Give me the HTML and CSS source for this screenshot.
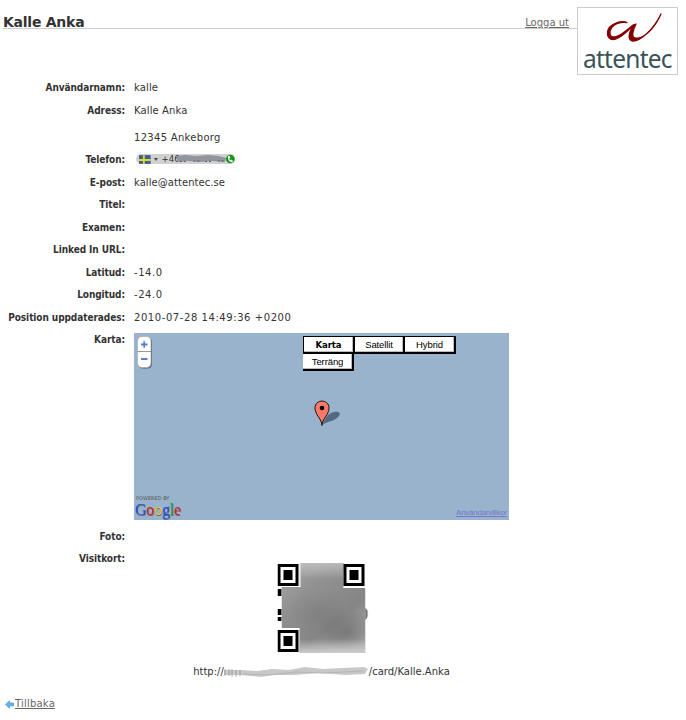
FILE: index.html
```html
<!DOCTYPE html>
<html lang="sv">
<head>
<meta charset="utf-8">
<title>Kalle Anka</title>
<link rel="stylesheet" href="styles.css">
</head>
<body>
<header class="header">
  <div class="bar"><h1>Kalle Anka</h1><a class="logout" href="#">Logga ut</a></div>
  <div class="logo">
    <svg width="99" height="36" viewBox="0 0 99 36"><path d="M49 14.5C43 12 32 16 30 22C28 29 32 33 38 31C46 28 52 20 56 17C51 24 49 31 54 33C62 34 76 21 83 6C77 20 65 32 57 30C53 29 55 22 58 16L55 17C47 24 41 29 36 29C31 29 31 23 34 19C38 15 44 14 49 14.5Z" fill="#820000" stroke="#820000" stroke-width="1.3" stroke-linejoin="round"/></svg>
    <span>attentec</span>
  </div>
</header>
<dl class="details">
  <dt>Användarnamn:</dt><dd>kalle</dd>
  <dt>Adress:</dt><dd class="address"><div>Kalle Anka</div><div class="mixed">12345 Ankeborg</div></dd>
  <dt>Telefon:</dt>
  <dd><div class="phone">
    <svg class="flag" width="12" height="9" viewBox="0 0 12 9"><path fill="#31649c" d="M0 0h12v9H0z"/><path fill="#f5cf27" d="M4 0h2v9H4zM0 4h12v2H0z"/></svg>
    <svg class="caret" width="4" height="3" viewBox="0 0 4 3"><path fill="#444" d="M0 0h4L2 3z"/></svg>
    <span>+46</span>
    <svg class="smudge" width="51" height="8" viewBox="0 0 51 8"><defs><filter id="soft"><feGaussianBlur stdDeviation=".6"/></filter></defs><g filter="url(#soft)"><path d="M0 1L8 0 20 1 32 0 43 1 51 3 49 7 36 6 23 7 10 6 0 7Z" fill="#90969b"/><path d="M3 6.5h8M17 6h6M29 6.5h7M42 6h6" stroke="#4c555c" stroke-dasharray="2 2"/></g></svg>
    <svg class="call" width="9" height="10" viewBox="0 0 9 10"><circle cx="4.5" cy="5" r="4.5" fill="#17941b"/><path d="M3 2C1.7 5 4 8 6.7 7.6M3 2l1 2M5 6l2 1.5" stroke="#fff" stroke-width="1.3" fill="none"/></svg>
  </div></dd>
  <dt>E-post:</dt><dd class="mail">kalle@attentec.se</dd>
  <dt>Titel:</dt><dd></dd>
  <dt>Examen:</dt><dd></dd>
  <dt>Linked In URL:</dt><dd></dd>
  <dt>Latitud:</dt><dd class="number">-14.0</dd>
  <dt>Longitud:</dt><dd class="number">-24.0</dd>
  <dt>Position uppdaterades:</dt><dd class="number">2010-07-28 14:49:36 +0200</dd>
  <dt>Karta:</dt>
  <dd class="mapcell"><div class="map">
    <div class="zoomctl">
      <svg width="16" height="33" viewBox="0 0 16 33"><rect x="1.5" y="1.5" width="13.5" height="31" rx="4.5" fill="#59646f"/><rect x=".5" y=".5" width="13.5" height="31" rx="4.5" fill="#fff" stroke="#aaa" stroke-width=".7"/><path d="M0 15.5h14" stroke="#999"/><path d="M4 8.5h6.5M7.2 5.2v6.5M4 23h6.5" stroke="#5b80cf" stroke-width="1.8"/></svg>
    </div>
    <div class="types"><button class="on">Karta</button><button>Satellit</button><button>Hybrid</button><button class="last">Terräng</button></div>
    <svg class="pin" width="30" height="27" viewBox="0 0 30 27"><defs><filter id="b"><feGaussianBlur stdDeviation=".7"/></filter></defs><path d="M8 25C11 20 13 13 20 12C26 11 28 14 23 18C18 22 14 21 8 25Z" fill="#526b80" filter="url(#b)"/><path d="M8 25.5C8 19 1 15 1 8C1-1.2 15-1.2 15 8C15 15 8 19 8 25.5Z" fill="#fe776b" stroke="#181312"/><circle cx="8" cy="8" r="2.3"/></svg>
    <div class="brand"><small>POWERED BY</small><b><i class="blue">G</i><i class="red">o</i><i class="yellow">o</i><i class="blue">g</i><i class="green">l</i><i class="red">e</i></b></div>
    <a class="terms" href="#">Användarvillkor</a>
  </div></dd>
  <dt>Foto:</dt><dd></dd>
  <dt>Visitkort:</dt>
  <dd class="card">
    <svg class="qr" width="94" height="92" viewBox="0 0 94 92">
      <defs>
        <linearGradient id="g" x2=".8" y2="1"><stop stop-color="#aaa"/><stop offset=".35" stop-color="#919191"/><stop offset=".7" stop-color="#858585"/><stop offset="1" stop-color="#aaa"/></linearGradient>
        <radialGradient id="d"><stop stop-color="#666" stop-opacity=".8"/><stop offset="1" stop-color="#666" stop-opacity="0"/></radialGradient>
        <linearGradient id="t" x2="0" y2="1"><stop stop-color="#c4c4c4" stop-opacity=".8"/><stop offset="1" stop-color="#c4c4c4" stop-opacity="0"/></linearGradient>
        <linearGradient id="e" x2="0" y2="1"><stop stop-color="#ccc" stop-opacity="0"/><stop offset="1" stop-color="#ccc"/></linearGradient>
        <linearGradient id="s"><stop stop-color="#333"/><stop offset="1" stop-color="#eee"/></linearGradient>
        <clipPath id="area"><path d="M22 0h44v25h22v65H22V65H4V24h18z"/></clipPath>
        <g id="finder"><path d="M0 0h21v22H0z"/><path d="M3 3h15v16H3z" fill="#fff"/><path d="M6 6h9v10h-9z"/></g>
      </defs>
      <path d="M0 26h4v7H0zM0 46h4v6H0zM0 54h4v4H0z"/>
      <path d="M88 45Q94 50 88 57z" fill="url(#s)"/>
      <g clip-path="url(#area)"><path d="M0 0h90v92H0z" fill="url(#g)"/>
      <ellipse cx="69" cy="69" rx="30" ry="22" fill="url(#d)" opacity=".75"/><ellipse cx="40" cy="50" rx="30" ry="24" fill="url(#d)" opacity=".3"/>
      <path d="M22 0h44v16H22z" fill="url(#t)"/><path d="M22 76h66v14H22z" fill="url(#e)"/></g>
      <path d="M22 0h1v24H4v-1h18z" fill="#fff"/><path d="M66 24.5h21" stroke="#fff" stroke-width="1" stroke-dasharray="6 2"/>
      <use href="#finder" x="0" y="1"/><use href="#finder" x="66" y="1"/><use href="#finder" x="0" y="67"/>
    </svg>
    <div class="url"><span>http://</span><svg width="145" height="12" viewBox="0 0 145 12"><g filter="url(#soft)"><path d="M0 4H18V9H0z" fill="#ccc"/><path d="M17 4L33 5 48 3 65 4 81 1 99 3 119 2 140 1 144 3 141 8 121 9 95 7 71 9 49 9 37 11 17 9Z" fill="#c8c8c8"/><path d="M19 8L45 9 72 6 100 7 139 5" stroke="#b5b5b5" fill="none"/></g><path d="M1 3v7M5 3v7M8 3v8M12 4v7M16 4v6" stroke="#777" stroke-width=".6"/></svg><span>/card/Kalle.Anka</span></div>
  </dd>
</dl>
<footer><svg width="9" height="9" viewBox="0 0 9 9"><path d="M.5 4.5L4.5 .8V3H8.5V6H4.5V8.2Z" fill="#65b5eb" stroke="#4b99d4" stroke-width=".7"/></svg><a href="#">Tillbaka</a></footer>
</body>
</html>
```
FILE: styles.css
```css
* { box-sizing: border-box; }
body { margin: 0; background: #fff; color: #333; font: 10px/14px "DejaVu Sans", Verdana, sans-serif; height: 720px; }
a { color: #666; }
.header { display: flex; height: 77px; padding: 7px 8px 0 3px; }
.bar { flex: 1; height: 22px; border-bottom: 1px solid #ccc; display: flex; justify-content: space-between; }
h1 { margin: 6px 0 0; font: bold 14px/19px "DejaVu Sans", Verdana, sans-serif; letter-spacing: -.25px; }
.logout { margin: 9px 8px 0 0; }
.logo { width: 101px; height: 68px; border: 1px solid #ccc; display: flex; flex-direction: column; }
.logo span { font: 24.5px/30px "Noto Sans", sans-serif; letter-spacing: -.75px; color: #385458; padding-left: 5px; }
.details { margin: 0; display: grid; grid-template-columns: 125px 375px; column-gap: 9px; grid-template-rows: 23px 49px repeat(8, 22.5px) 196.5px 22.5px 134px; }
dt { font: bold 10px/14px "DejaVu Sans Condensed", "DejaVu Sans", sans-serif; letter-spacing: -.08px; text-align: right; padding-top: 4px; white-space: nowrap; }
dd { margin: 0; padding-top: 4px; letter-spacing: .12px; }
.mail { letter-spacing: .06px; }
.mixed { letter-spacing: .3px; }
.number { letter-spacing: .57px; }
.address { display: flex; flex-direction: column; gap: 13px; }
.phone { display: flex; align-items: center; width: 99px; height: 10px; margin: 1px 0 0 2px; padding-left: 3px; background: #d1d1d1; border-radius: 5px; font-size: 8.5px; }
.caret { margin: 0 4px 0 3px; }
.smudge { margin-left: -3px; }
.call { margin-left: auto; }
.mapcell { padding-top: 4px; }
.map { position: relative; width: 375px; height: 187px; background: #99b3cc; letter-spacing: 0; }
.zoomctl { position: absolute; left: 3px; top: 3px; }
.types { position: absolute; left: 169px; top: 3px; width: 155px; display: flex; flex-wrap: wrap; }
.types button { width: 50px; height: 18px; padding: 0; background: #fff; border: solid #000; border-width: 1px 2px 2px 0; font: 9.5px/14px "Liberation Sans", sans-serif; letter-spacing: -.1px; box-shadow: inset -1px -1px #bbb; color: #000; }
.types .on { font: bold 9.5px/14px "DejaVu Sans Condensed", sans-serif; width: 52px; border-left-width: 1px; }
.types button:nth-child(3) { width: 51px; }
.types .last { width: 51px; border-top: 0; height: 17px; }
.pin { position: absolute; left: 180px; top: 67px; }
.brand { position: absolute; left: 1px; top: 162px; width: 50px; }
.brand small { display: block; font: 5px/7px "DejaVu Sans", sans-serif; color: #555; padding-left: 1px; }
.brand b { display: block; font: 16px/16px "Liberation Serif", serif; letter-spacing: -.2px; text-shadow: .5px .5px #667; }
.brand i { font-style: normal; }
.blue { color: #2352d8; } .red { color: #d92525; } .yellow { color: #efc529; } .green { color: #279b35; }
.terms { position: absolute; right: 2px; bottom: 2px; font: 8px/11px "Liberation Sans", sans-serif; letter-spacing: -.25px; color: #7777cc; }
.card { display: flex; flex-direction: column; align-items: center; padding-top: 15px; }
.qr { width: 94px; height: 92px; margin-left: 6px; transform: translateX(-.5px); }
.url { display: flex; align-items: center; margin-top: 10px; white-space: nowrap; letter-spacing: 0; }
footer { display: flex; align-items: center; gap: 1px; margin: 15px 0 0 5px; letter-spacing: .2px; }
```
